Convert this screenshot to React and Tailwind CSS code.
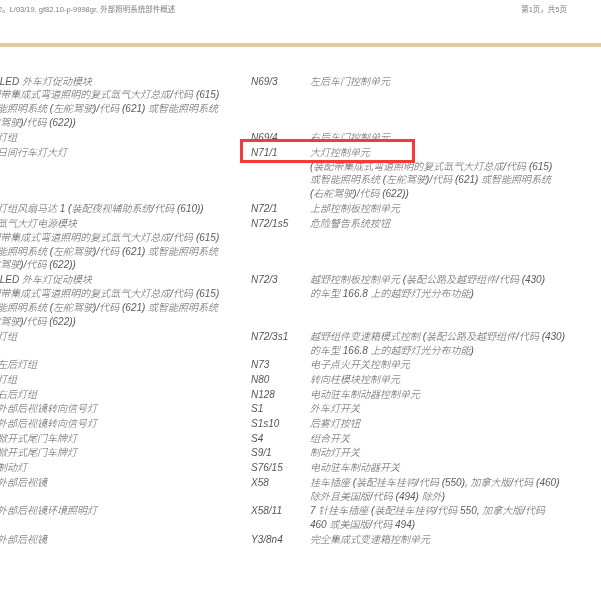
const rows = [
  [["左前 LED 外车灯促动模块", "(装配带集成式弯道照明的复式氙气大灯总成/代码 (615)", "或智能照明系统 (左舵驾驶)/代码 (621) 或智能照明系统", "(右舵驾驶)/代码 (622))"], "N69/3", ["左后车门控制单元"]],
  [["右前灯组"], "N69/4", ["右后车门控制单元"]],
  [["左前日间行车灯大灯"], "N71/1", ["大灯控制单元", "(装配带集成式弯道照明的复式氙气大灯总成/代码 (615)", "或智能照明系统 (左舵驾驶)/代码 (621) 或智能照明系统", "(右舵驾驶)/代码 (622))"]],
  [["左前灯组风扇马达 1 (装配夜视辅助系统/代码 (610))"], "N72/1", ["上部控制板控制单元"]],
  [["左前氙气大灯电源模块", "(装配带集成式弯道照明的复式氙气大灯总成/代码 (615)", "或智能照明系统 (左舵驾驶)/代码 (621) 或智能照明系统", "(右舵驾驶)/代码 (622))"], "N72/1s5", ["危险警告系统按钮"]],
  [["右前 LED 外车灯促动模块", "(装配带集成式弯道照明的复式氙气大灯总成/代码 (615)", "或智能照明系统 (左舵驾驶)/代码 (621) 或智能照明系统", "(右舵驾驶)/代码 (622))"], "N72/3", ["越野控制板控制单元 (装配公路及越野组件/代码 (430)", "的车型 166.8 上的越野灯光分布功能)"]],
  [["左前灯组"], "N72/3s1", ["越野组件变速箱模式控制 (装配公路及越野组件/代码 (430)", "的车型 166.8 上的越野灯光分布功能)"]],
  [["尾部左后灯组"], "N73", ["电子点火开关控制单元"]],
  [["右前灯组"], "N80", ["转向柱模块控制单元"]],
  [["尾部右后灯组"], "N128", ["电动驻车制动器控制单元"]],
  [["左侧外部后视镜转向信号灯"], "S1", ["外车灯开关"]],
  [["右侧外部后视镜转向信号灯"], "S1s10", ["后雾灯按钮"]],
  [["左侧掀开式尾门车牌灯"], "S4", ["组合开关"]],
  [["右侧掀开式尾门车牌灯"], "S9/1", ["制动灯开关"]],
  [["高位制动灯"], "S76/15", ["电动驻车制动器开关"]],
  [["左侧外部后视镜"], "X58", ["挂车插座 (装配挂车挂钩/代码 (550), 加拿大版/代码 (460)", "除外且美国版/代码 (494) 除外)"]],
  [["左侧外部后视镜环境照明灯"], "X58/11", ["7 针挂车插座 (装配挂车挂钩/代码 550, 加拿大版/代码", "460 或美国版/代码 494)"]],
  [["右侧外部后视镜"], "Y3/8n4", ["完全集成式变速箱控制单元"]],
];

function Lines({ items }) {
  return items.map((line) => (
    <div key={line} className="whitespace-nowrap">
      {line}
    </div>
  ));
}

export default function App() {
  return (
    <div className="relative h-[596px] w-[601px] overflow-hidden bg-white font-['Liberation_Sans','Noto_Sans_CJK_SC',sans-serif] text-[#5c5c5c]">
      {/* Header */}
      <div className="flex h-[43px] items-start justify-between pt-[5px] pr-[34px] text-[7.5px] leading-[9px] text-[#808080] blur-[0.3px]">
        <span className="-ml-[2px] whitespace-nowrap">2。L/03/19, gf82.10-p-9998gr, 外部照明系统部件概述</span>
        <span className="whitespace-nowrap">第1页，共5页</span>
      </div>
      <div className="h-[4px] bg-[#dfcba6]"></div>

      {/* Table */}
      <div className="mt-[27.5px] -ml-[23px] grid grid-cols-[274px_59px_1fr] text-[10px] leading-[13.9px] font-light italic blur-[0.3px]">
        {rows.map(([left, code, right]) => (
          <div key={code} className="col-span-3 grid grid-cols-subgrid pb-[0.8px]">
            <div>
              <Lines items={left} />
            </div>
            <div className="text-[#555]">{code}</div>
            <div>
              <Lines items={right} />
            </div>
          </div>
        ))}
      </div>

      {/* Red highlight */}
      <div className="absolute top-[139px] left-[240px] h-[24px] w-[175px] border-[3.5px] border-[#f43a3a]"></div>
    </div>
  );
}
